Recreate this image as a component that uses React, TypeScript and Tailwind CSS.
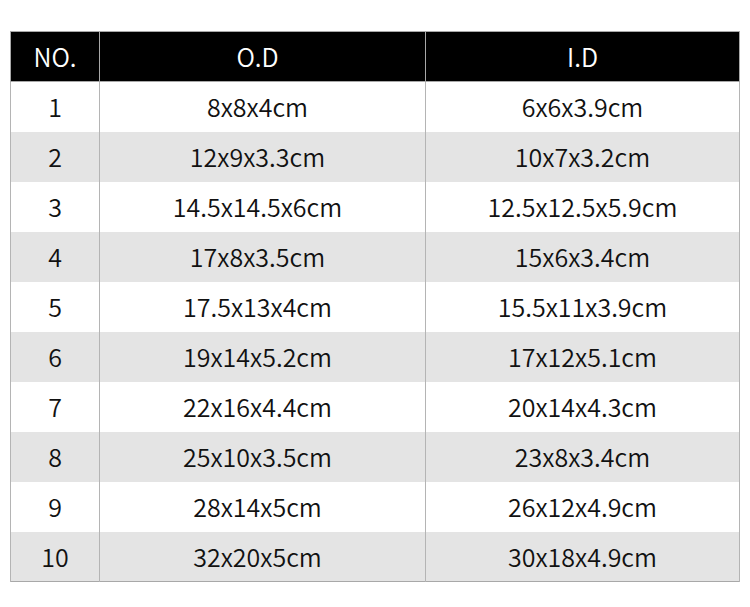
const rows = [
  ['1', '8x8x4cm', '6x6x3.9cm'],
  ['2', '12x9x3.3cm', '10x7x3.2cm'],
  ['3', '14.5x14.5x6cm', '12.5x12.5x5.9cm'],
  ['4', '17x8x3.5cm', '15x6x3.4cm'],
  ['5', '17.5x13x4cm', '15.5x11x3.9cm'],
  ['6', '19x14x5.2cm', '17x12x5.1cm'],
  ['7', '22x16x4.4cm', '20x14x4.3cm'],
  ['8', '25x10x3.5cm', '23x8x3.4cm'],
  ['9', '28x14x5cm', '26x12x4.9cm'],
  ['10', '32x20x5cm', '30x18x4.9cm'],
];

export default function App() {
  return (
    <div className="w-[750px] h-[607px] bg-white pt-[31px] pl-[10px] font-['Noto_Sans_CJK_SC','Noto_Sans',sans-serif]">
      <table className="w-[730px] border-collapse table-fixed text-[25px] font-[350] text-[#111] border border-[#a8a8a8]">
        <colgroup>
          <col className="w-[89px]" />
          <col className="w-[326px]" />
          <col />
        </colgroup>
        <thead>
          <tr className="h-[50px] bg-black text-white">
            <th className="border border-[#a8a8a8] font-[350] p-0 leading-none">NO.</th>
            <th className="border border-[#a8a8a8] font-[350] p-0 pr-[10px] leading-none">O.D</th>
            <th className="border border-[#a8a8a8] font-[350] p-0 leading-none">I.D</th>
          </tr>
        </thead>
        <tbody>
          {rows.map((r, i) => (
            <tr key={r[0]} className={`h-[50px] ${i % 2 === 1 ? 'bg-[#e4e4e4]' : 'bg-white'}`}>
              <td className="border-x border-[#b4b4b4] text-center p-0 leading-none">{r[0]}</td>
              <td className="border-x border-[#b4b4b4] text-center p-0 pr-[10px] leading-none">{r[1]}</td>
              <td className="border-x border-[#b4b4b4] text-center p-0 leading-none">{r[2]}</td>
            </tr>
          ))}
        </tbody>
      </table>
    </div>
  );
}
